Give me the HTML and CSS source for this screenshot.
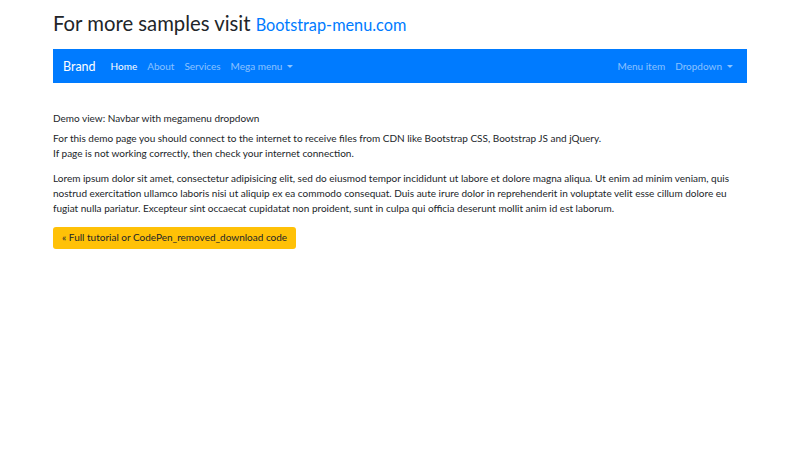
FILE: index.html
```html
<!DOCTYPE html>
<html lang="en">
<head>
    <meta charset="UTF-8" />
    <title>Navbar with megamenu</title>
    <link rel="stylesheet" href="styles.css">
</head>
<body>

<div class="container">
    <h3 class="page-title">For more samples visit <a href="#">Bootstrap-menu.com</a></h3>

    <nav class="navbar">
        <a class="brand" href="#">Brand</a>
        <ul class="nav-list">
            <li class="active"><a href="#">Home</a></li>
            <li><a href="#">About</a></li>
            <li><a href="#">Services</a></li>
            <li><a href="#" class="dropdown-toggle">Mega menu</a></li>
        </ul>
        <ul class="nav-list nav-right">
            <li><a href="#">Menu item</a></li>
            <li><a href="#" class="dropdown-toggle">Dropdown</a></li>
        </ul>
    </nav>

    <div class="content">
        <p class="demo-label">Demo view: Navbar with megamenu dropdown</p>
        <p>For this demo page you should connect to the internet to receive files from CDN like Bootstrap CSS, Bootstrap JS and jQuery.<br>
        If page is not working correctly, then check your internet connection.</p>

        <p>Lorem ipsum dolor sit amet, consectetur adipisicing elit, sed do eiusmod tempor incididunt ut labore et dolore magna aliqua. Ut enim ad minim veniam, quis nostrud exercitation ullamco laboris nisi ut aliquip ex ea commodo consequat. Duis aute irure dolor in reprehenderit in voluptate velit esse cillum dolore eu fugiat nulla pariatur. Excepteur sint occaecat cupidatat non proident, sunt in culpa qui officia deserunt mollit anim id est laborum.</p>

        <a href="#" class="btn-warning">&laquo; Full tutorial or CodePen_removed_download code</a>
    </div>
</div>

</body>
</html>
```

FILE: styles.css
```css
body {
    margin: 0;
    font-family: Lato, "Open Sans", sans-serif;
    font-size: 10px;
    line-height: 15px;
    color: #212529;
    background: #fff;
}

a {
    text-decoration: none;
}

.container {
    width: 694px;
    margin: 0 0 0 53px;
}

.page-title {
    margin: 0;
    padding-top: 10px;
    height: 49px;
    font-size: 20.3px;
    font-weight: 400;
    line-height: 26px;
    box-sizing: border-box;
}

.page-title a {
    color: #007bff;
    font-size: 16.3px;
}

/* Navbar */
.navbar {
    display: flex;
    align-items: center;
    height: 34px;
    padding: 0 14px 0 10px;
    background-color: #007bff;
}

.brand {
    color: #fff;
    font-size: 12.5px;
    margin-right: 15px;
}

.nav-list {
    display: flex;
    list-style: none;
    margin: 0;
    padding: 0;
    gap: 10px;
}

.nav-right {
    margin-left: auto;
}

.nav-list a {
    color: rgba(255, 255, 255, 0.55);
}

.nav-list .active a {
    color: #fff;
}

.dropdown-toggle::after {
    content: "";
    display: inline-block;
    margin-left: 5px;
    vertical-align: 2px;
    border-top: 3px solid;
    border-left: 3px solid transparent;
    border-right: 3px solid transparent;
}

/* Content */
.content {
    padding-top: 28px;
}

.content p {
    margin: 0 0 10px;
}

.content .demo-label {
    margin-bottom: 5px;
}

.btn-warning {
    display: inline-block;
    margin-top: 1px;
    padding: 3px 9px 4px;
    background-color: #ffc107;
    color: #212529;
    border-radius: 3px;
}
```
